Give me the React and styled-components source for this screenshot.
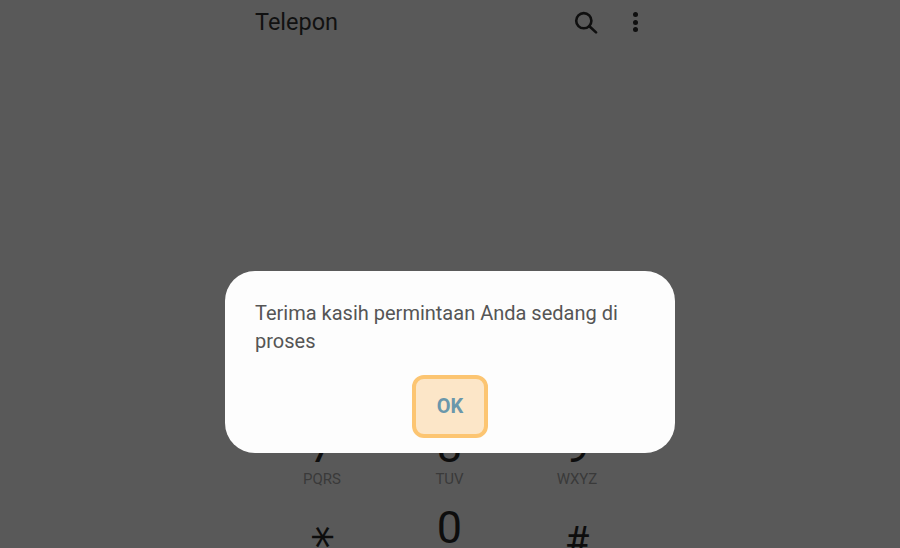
import React from 'react'
import styled, { createGlobalStyle } from 'styled-components'

const keys = [
  { digit: '7', letters: 'PQRS' },
  { digit: '8', letters: 'TUV' },
  { digit: '9', letters: 'WXYZ' },
  { digit: '*', symbol: 'star' },
  { digit: '0' },
  { digit: '#', symbol: 'hash' },
]

const App = () => {
  return (
    <>
      <GlobalStyle />
      <Page>
        <Header>
          <Title>Telepon</Title>
          <Actions>
            <svg width="24" height="24" viewBox="0 0 24 24" fill="none" stroke="#0f0f0f" strokeWidth="2.6">
              <circle cx="9.8" cy="10.7" r="7.6" />
              <path d="M15.4 16.2L22 22.4" strokeLinecap="round" />
            </svg>
            <Dots>
              <Dot />
              <Dot />
              <Dot />
            </Dots>
          </Actions>
        </Header>
        <Keypad>
          {keys.map((key) => (
            <Key key={key.digit}>
              {key.symbol === 'star' && <Star>{key.digit}</Star>}
              {key.symbol === 'hash' && <Hash>{key.digit}</Hash>}
              {!key.symbol && <Digit>{key.digit}</Digit>}
              {key.letters && <Letters>{key.letters}</Letters>}
            </Key>
          ))}
        </Keypad>
        <Dialog>
          <Message>Terima kasih permintaan Anda sedang di proses</Message>
          <OkButton>OK</OkButton>
        </Dialog>
      </Page>
    </>
  )
}

export default App

const GlobalStyle = createGlobalStyle`
html, body {
  margin: 0;
  padding: 0;
  background: #595959;
  overflow: hidden;
}
`
const Page = styled.div`
position: relative;
width: 900px;
height: 548px;
overflow: hidden;
background: #595959;
font-family: Roboto, "Liberation Sans", sans-serif;
`
const Header = styled.div`
display: flex;
align-items: center;
justify-content: space-between;
width: 382.5px;
height: 44px;
margin-left: 255px;
`
const Title = styled.div`
font-size: 23.5px;
color: #111111;
`
const Actions = styled.div`
display: flex;
align-items: center;
gap: 34.5px;
`
const Dots = styled.div`
display: flex;
flex-direction: column;
gap: 2.7px;
`
const Dot = styled.span`
width: 5px;
height: 5px;
border-radius: 50%;
background: #0f0f0f;
`
const Keypad = styled.div`
display: grid;
grid-template-columns: repeat(3, 127.5px);
grid-auto-rows: 81px;
justify-content: center;
margin-top: 380px;
margin-left: -1px;
`
const Key = styled.div`
display: flex;
flex-direction: column;
align-items: center;
`
const Digit = styled.div`
font-size: 45px;
line-height: 46px;
color: #0d0d0d;
`
const Hash = styled(Digit)`
font-size: 40px;
margin-top: 14px;
`
const Star = styled(Digit)`
font-family: "DejaVu Sans", sans-serif;
font-size: 46px;
margin-top: 14px;
transform: translate(-8px, -5px) rotate(90deg);
`
const Letters = styled.div`
font-size: 15px;
line-height: 18px;
color: #3a3a3a;
`
const Dialog = styled.div`
position: absolute;
left: 225px;
top: 271px;
box-sizing: border-box;
width: 450px;
height: 182px;
padding: 28px 30px 0;
background: #fdfdfd;
border-radius: 30px;
display: flex;
flex-direction: column;
`
const Message = styled.div`
font-size: 20px;
line-height: 28px;
color: #555555;
`
const OkButton = styled.div`
box-sizing: border-box;
align-self: center;
display: flex;
align-items: center;
justify-content: center;
width: 76px;
height: 63px;
margin-top: 20px;
padding-bottom: 2px;
background: #fce6c8;
border: 4px solid #fcc572;
border-radius: 12px;
color: #6a97ab;
font-size: 20px;
font-weight: 700;
`
